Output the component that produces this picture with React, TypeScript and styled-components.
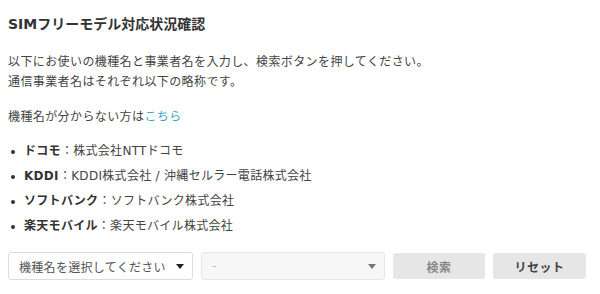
import React from "react";
import styled, { createGlobalStyle } from "styled-components";

const Global = createGlobalStyle`
  html, body { margin: 0; padding: 0; background: #fff; }
  body {
    font-family: "DejaVu Sans", "Noto Sans CJK JP", sans-serif;
    color: #444;
  }
`;

const Page = styled.div`
  padding: 14px 8px 0 8px;
  width: 578px;
`;

const Title = styled.h2`
  margin: 0 0 18px 0;
  font-size: 14px;
  font-weight: bold;
  color: #333;
  line-height: 20px;
  letter-spacing: 0px;
`;

const Para = styled.p<{ $mb: number }>`
  margin: 0 0 ${(p) => p.$mb}px 0;
  font-size: 12px;
  line-height: 20px;
  color: #444;
  letter-spacing: 0.4px;
`;

const Link = styled.a`
  color: #3aa6c0;
  text-decoration: none;
`;

const List = styled.ul`
  margin: 0;
  padding: 0 0 0 16px;
  list-style: none;
`;

const Item = styled.li`
  position: relative;
  font-size: 12px;
  line-height: 25px;
  color: #444;
  letter-spacing: 0.3px;
  &::before {
    content: "";
    position: absolute;
    left: -13px;
    top: 11px;
    width: 4px;
    height: 4px;
    border-radius: 50%;
    background: #333;
  }
`;

const Label = styled.strong`
  font-weight: bold;
  color: #333;
`;

const Controls = styled.div`
  display: flex;
  gap: 8px;
  margin-top: 13px;
  align-items: center;
`;

const Select = styled.div<{ $disabled?: boolean; $w: number }>`
  box-sizing: border-box;
  width: ${(p) => p.$w}px;
  height: 28px;
  border: 1px solid ${(p) => (p.$disabled ? "#e6e6e6" : "#dcdcdc")};
  border-radius: 3px;
  background: ${(p) => (p.$disabled ? "#f7f7f7" : "#fff")};
  display: flex;
  align-items: center;
  justify-content: space-between;
  padding: 0 8px 0 10px;
  font-size: 12px;
  letter-spacing: 0.3px;
  color: ${(p) => (p.$disabled ? "#bbb" : "#555")};
`;

const Arrow = styled.span<{ $disabled?: boolean }>`
  width: 0;
  height: 0;
  border-left: 4px solid transparent;
  border-right: 4px solid transparent;
  border-top: 5px solid ${(p) => (p.$disabled ? "#777" : "#222")};
`;

const Button = styled.button<{ $muted?: boolean; $w: number }>`
  box-sizing: border-box;
  width: ${(p) => p.$w}px;
  height: 26px;
  border: none;
  border-radius: 3px;
  background: #e6e6e6;
  font-family: "DejaVu Sans", "Noto Sans CJK JP", sans-serif;
  font-size: 12px;
  font-weight: bold;
  letter-spacing: 0.5px;
  color: ${(p) => (p.$muted ? "#888" : "#444")};
  padding: 0;
`;

export default function App() {
  return (
    <>
      <Global />
      <Page>
        <Title>SIMフリーモデル対応状況確認</Title>
        <Para $mb={15}>
          以下にお使いの機種名と事業者名を入力し、検索ボタンを押してください。
          <br />
          通信事業者名はそれぞれ以下の略称です。
        </Para>
        <Para $mb={12}>
          機種名が分からない方は<Link href="#">こちら</Link>
        </Para>
        <List>
          <Item>
            <Label>ドコモ</Label>：株式会社NTTドコモ
          </Item>
          <Item>
            <Label>KDDI</Label>：KDDI株式会社 / 沖縄セルラー電話株式会社
          </Item>
          <Item>
            <Label>ソフトバンク</Label>：ソフトバンク株式会社
          </Item>
          <Item>
            <Label>楽天モバイル</Label>：楽天モバイル株式会社
          </Item>
        </List>
        <Controls>
          <Select $w={185}>
            <span>機種名を選択してください</span>
            <Arrow />
          </Select>
          <Select $w={184} $disabled>
            <span>-</span>
            <Arrow $disabled />
          </Select>
          <Button $w={92} $muted>検索</Button>
          <Button $w={93}>リセット</Button>
        </Controls>
      </Page>
    </>
  );
}
